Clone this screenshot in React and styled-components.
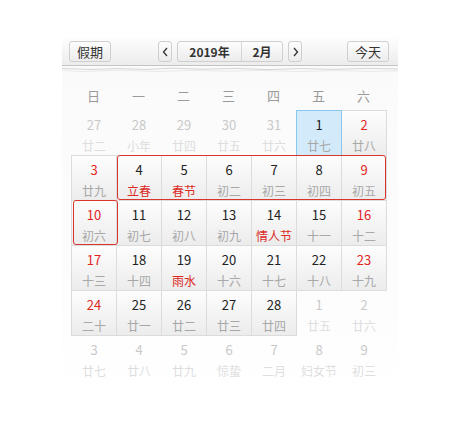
import React from "react";
import styled, { createGlobalStyle } from "styled-components";

const Global = createGlobalStyle`
  html, body { margin: 0; padding: 0; background: #fff; }
  body { font-family: "Noto Sans CJK SC", "Noto Sans", sans-serif; }
`;

const Panel = styled.div`
  margin: 37px 0 0 62px;
  width: 336px;
  background: linear-gradient(#fafafa, #fdfdfd 80%, #fff);
`;

const Header = styled.div`
  border-bottom: 1px solid #c4c4c4;
  background: linear-gradient(#fefefe, #ececec);
  display: flex;
  align-items: flex-start;
  padding: 4px 9px 0 7px;
  box-sizing: content-box;
  height: 24px;
`;

const Btn = styled.div`
  height: 19px;
  width: ${(p) => p.$w}px;
  border: 1px solid #cfcfcf;
  border-radius: 3px;
  background: linear-gradient(#fdfdfd, #ececec);
  display: flex;
  align-items: center;
  justify-content: center;
  font-size: 13px;
  color: #333;
  box-sizing: content-box;
  margin-left: ${(p) => p.$ml || 0}px;
`;

const Group = styled.div`
  display: flex;
  margin-left: ${(p) => p.$ml}px;
  border: 1px solid #cfcfcf;
  border-radius: 3px;
  background: linear-gradient(#fdfdfd, #ececec);
  height: 19px;
`;

const GroupPart = styled.div`
  width: ${(p) => p.$w}px;
  display: flex;
  align-items: center;
  justify-content: center;
  font-size: 12px;
  font-weight: 700;
  color: #333;
  border-left: ${(p) => (p.$sep ? "1px solid #d6d6d6" : "none")};
`;

const Spacer = styled.div`
  flex: 1;
`;

const Torn = styled.svg`
  display: block;
  width: 336px;
  height: 9px;
`;

const WeekRow = styled.div`
  display: grid;
  grid-template-columns: repeat(7, 45px);
  margin-left: 9px;
  height: 35px;
  align-items: center;
`;

const WeekDay = styled.div`
  text-align: center;
  font-size: 13px;
  color: #9a9a9a;
  padding-top: 6px;
`;

const Grid = styled.div`
  position: relative;
  display: grid;
  grid-template-columns: repeat(7, 45px);
  grid-auto-rows: 45px;
  margin-left: 9px;
  padding-bottom: 12px;
`;

const Cell = styled.div`
  display: flex;
  flex-direction: column;
  align-items: center;
  box-sizing: border-box;
  margin: 0 -1px -1px 0;
  border: 1px solid
    ${(p) => (p.$today ? "#86c8ef" : p.$cur ? "#dcdcdc" : "transparent")};
  background: ${(p) =>
    p.$today
      ? "#d3eafb"
      : p.$cur
      ? "linear-gradient(#fdfdfd, #ececec)"
      : "transparent"};
  position: relative;
  z-index: ${(p) => (p.$today ? 1 : 0)};
`;

const Num = styled.div`
  font-size: 13px;
  line-height: 16px;
  margin-top: 6px;
  color: ${(p) => (!p.$cur ? "#c9c9c9" : p.$red ? "#e0261e" : "#222")};
`;

const Lunar = styled.div`
  font-size: 12px;
  line-height: 14px;
  margin-top: 6px;
  color: ${(p) => (!p.$cur ? "#dedede" : p.$red ? "#dc2a1f" : "#a8a8a8")};
`;

const Mark = styled.div`
  position: absolute;
  border: 1px solid #d8362c;
  border-radius: 3px;
  box-sizing: border-box;
  z-index: 2;
  pointer-events: none;
`;

const weekdays = ["日", "一", "二", "三", "四", "五", "六"];

// [num, lunar, current, redNum, redLunar, today]
const rows = [
  [[27, "廿二"], [28, "小年"], [29, "廿四"], [30, "廿五"], [31, "廿六"], [1, "廿七", 1, 0, 0, 1], [2, "廿八", 1, 1]],
  [[3, "廿九", 1, 1], [4, "立春", 1, 0, 1], [5, "春节", 1, 0, 1], [6, "初二", 1], [7, "初三", 1], [8, "初四", 1], [9, "初五", 1, 1]],
  [[10, "初六", 1, 1], [11, "初七", 1], [12, "初八", 1], [13, "初九", 1], [14, "情人节", 1, 0, 1], [15, "十一", 1], [16, "十二", 1, 1]],
  [[17, "十三", 1, 1], [18, "十四", 1], [19, "雨水", 1, 0, 1], [20, "十六", 1], [21, "十七", 1], [22, "十八", 1], [23, "十九", 1, 1]],
  [[24, "二十", 1, 1], [25, "廿一", 1], [26, "廿二", 1], [27, "廿三", 1], [28, "廿四", 1], [1, "廿五"], [2, "廿六"]],
  [[3, "廿七"], [4, "廿八"], [5, "廿九"], [6, "惊蛰"], [7, "二月"], [8, "妇女节"], [9, "初三"]],
];

const marks = [
  { col: 1, row: 1, w: 6, h: 1, dx: 1, dw: -1 },
  { col: 0, row: 2, w: 1, h: 1, dx: 2, dw: 0 },
];

export default function App() {
  return (
    <>
      <Global />
      <Panel>
        <Header>
          <Btn $w={40}>假期</Btn>
          <Btn $w={12} $ml={47}>
            <svg width="7" height="10" viewBox="0 0 7 10">
              <path d="M5 1 L1.5 5 L5 9" fill="none" stroke="#333" strokeWidth="1.3" />
            </svg>
          </Btn>
          <Group $ml={5}>
            <GroupPart $w={63}>2019年</GroupPart>
            <GroupPart $w={40} $sep>2月</GroupPart>
          </Group>
          <Btn $w={12} $ml={5}>
            <svg width="7" height="10" viewBox="0 0 7 10">
              <path d="M2 1 L5.5 5 L2 9" fill="none" stroke="#333" strokeWidth="1.3" />
            </svg>
          </Btn>
          <Spacer />
          <Btn $w={40}>今天</Btn>
        </Header>
        <Torn viewBox="0 0 336 9" preserveAspectRatio="none">
          <path
            d="M0 2.5 L30 3.5 L55 2.5 L85 3.5 L110 2.2 L140 3.2 L175 2.4 L205 3.6 L240 2.6 L270 3.4 L305 2.4 L336 3"
            fill="none"
            stroke="#d0d0d0"
            strokeWidth="0.9"
          />
          <path
            d="M0 4.5 L20 5.5 L60 4.2 L95 5.6 L130 4.4 L165 5.2 L200 4.4 L235 5.6 L275 4.6 L310 5.4 L336 4.8"
            fill="none"
            stroke="#e6e6e6"
            strokeWidth="0.9"
          />
        </Torn>
        <WeekRow>
          {weekdays.map((d) => (
            <WeekDay key={d}>{d}</WeekDay>
          ))}
        </WeekRow>
        <Grid>
          {rows.flat().map(([n, l, cur, rn, rl, today], i) => (
            <Cell key={i} $cur={!!cur} $today={!!today}>
              <Num $cur={!!cur} $red={!!rn}>{n}</Num>
              <Lunar $cur={!!cur} $red={!!rl}>{l}</Lunar>
            </Cell>
          ))}
          {marks.map((m, i) => (
            <Mark
              key={i}
              style={{
                left: m.col * 45 + m.dx,
                top: m.row * 45,
                width: m.w * 45 + m.dw,
                height: m.h * 45,
              }}
            />
          ))}
        </Grid>
      </Panel>
    </>
  );
}
